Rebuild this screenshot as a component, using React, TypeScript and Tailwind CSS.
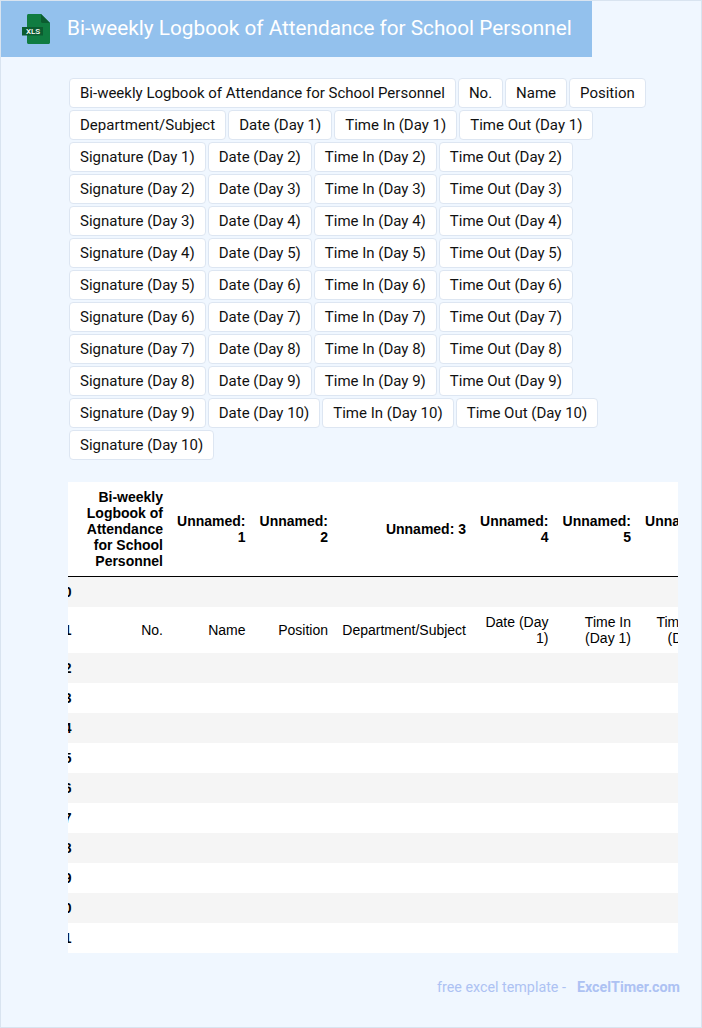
const days = [1, 2, 3, 4, 5, 6, 7, 8, 9, 10];

const tags = [
  "Bi-weekly Logbook of Attendance for School Personnel",
  "No.",
  "Name",
  "Position",
  "Department/Subject",
  ...days.flatMap((d) => [`Date (Day ${d})`, `Time In (Day ${d})`, `Time Out (Day ${d})`, `Signature (Day ${d})`]),
];

const columns = [
  { head: "Bi-weekly Logbook of Attendance for School Personnel", label: "No.", width: "w-[91px]" },
  { head: "Unnamed: 1", label: "Name", width: "w-[82.5px]" },
  { head: "Unnamed: 2", label: "Position", width: "w-[82.5px]" },
  { head: "Unnamed: 3", label: "Department/Subject", width: "w-[138px]" },
  { head: "Unnamed: 4", label: "Date (Day 1)", width: "w-[82.5px]" },
  { head: "Unnamed: 5", label: "Time In (Day 1)", width: "w-[82.5px]" },
  { head: "Unnamed: 6", label: "Time Out (Day 1)", width: "w-[82.5px]" },
];

const rows = [0, 1, 2, 3, 4, 5, 6, 7, 8, 9, 10, 11];

function XlsIcon() {
  return (
    <svg width="28" height="30" viewBox="0 0 28 30" className="shrink-0">
      <path d="M5 1.500C5 .7 5.700 0 6.500 0H19l9 9v19.500c0 .8-.7 1.500-1.500 1.500h-20C5.700 30 5 29.300 5 28.500z" fill="#107c41" />
      <path d="M19 0l9 9h-7.500c-.8 0-1.500-.7-1.500-1.500z" fill="#0b5c30" />
      <rect x="0" y="13" width="21" height="8.500" fill="#0b5c30" />
      <text x="11" y="20.300" textAnchor="middle" fill="#ffffff" fontSize="8" fontWeight="500" fontFamily="Roboto, sans-serif">
        XLS
      </text>
    </svg>
  );
}

export default function App() {
  return (
    <div className="min-h-[1028px] border border-[#d9e4f0] bg-[#f0f7ff] font-['Roboto',sans-serif]">
      <div className="flex h-14 w-[591px] items-center gap-[17px] bg-[#93c1ed] pl-[21px]">
        <XlsIcon />
        <h1 className="pb-[2px] text-[20.76px] leading-none font-normal whitespace-nowrap text-white">
          Bi-weekly Logbook of Attendance for School Personnel
        </h1>
      </div>

      <div className="ml-[67px] w-[610px]">
        <div className="mt-[20px] flex flex-wrap">
          {tags.map((tag) => (
            <span
              key={tag}
              className="m-px flex h-[30px] items-center rounded-[4px] border border-[#dde6f2] bg-white px-[10px] text-[15px] whitespace-nowrap text-[#111111]"
            >
              {tag}
            </span>
          ))}
        </div>

        <div className="mt-[21px] overflow-hidden bg-white">
          <table className="ml-[-19px] w-[671.5px] table-fixed border-collapse font-['Liberation_Sans',Arial,sans-serif] text-[14px] leading-4 text-black">
            <thead>
              <tr className="border-b border-black">
                <th className="w-[30px] p-[7px]"></th>
                {columns.map((col) => (
                  <th key={col.head} className={`${col.width} p-[7px] text-right align-middle font-bold`}>
                    {col.head}
                  </th>
                ))}
              </tr>
            </thead>
            <tbody>
              {rows.map((row) => (
                <tr key={row} className="odd:bg-[#f5f5f5] even:bg-white">
                  <th className="py-[7px] pr-[7.5px] pl-[6px] text-right align-middle font-bold">{row}</th>
                  {columns.map((col) => (
                    <td key={col.head} className="h-[30px] p-[7px] text-right align-middle">
                      {row === 1 ? col.label : ""}
                    </td>
                  ))}
                </tr>
              ))}
            </tbody>
          </table>
        </div>

        <p className="mt-[25px] mr-[-2px] text-right text-[14.3px] leading-[18px] whitespace-nowrap text-[#adc2f3]">
          free excel template -<span className="ml-[11px] font-bold">ExcelTimer.com</span>
        </p>
      </div>
    </div>
  );
}
